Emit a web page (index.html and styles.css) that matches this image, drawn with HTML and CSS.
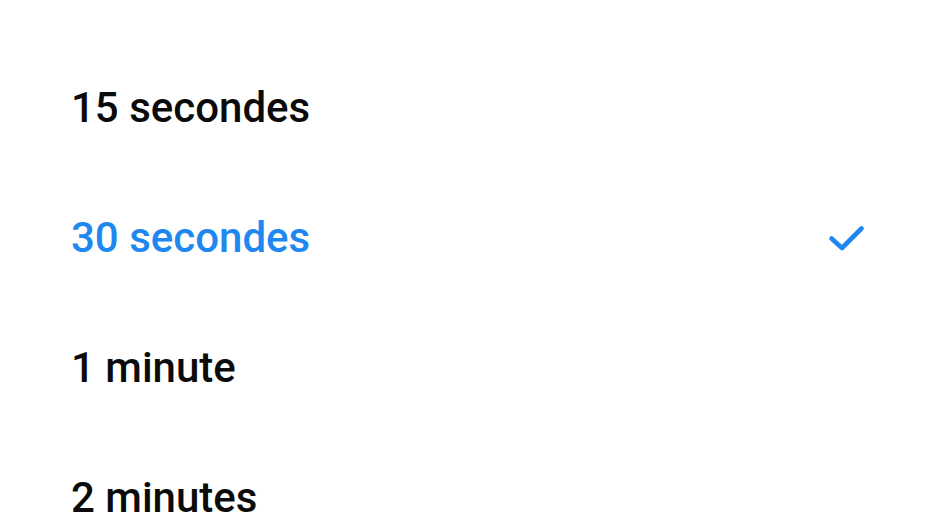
FILE: index.html
```html
<!DOCTYPE html>
<html lang="fr">
<head>
    <meta charset="UTF-8">
    <meta name="viewport" content="width=device-width, initial-scale=1.0">
    <title>Mise en veille</title>
    <link rel="stylesheet" href="styles.css">
</head>
<body>
    <ul class="option-list">
        <li class="option">
            <span class="option-label">15 secondes</span>
        </li>
        <li class="option selected">
            <span class="option-label">30 secondes</span>
            <svg class="check" width="40" height="34" viewBox="0 0 40 34">
                <polyline points="5.5,17.5 16,27 35.5,7.5" />
            </svg>
        </li>
        <li class="option">
            <span class="option-label">1 minute</span>
        </li>
        <li class="option">
            <span class="option-label">2 minutes</span>
        </li>
    </ul>
</body>
</html>
```

FILE: styles.css
```css
body {
    font-family: Roboto, 'Noto Sans', sans-serif;
    color: #0b0b0b;
    margin: 0;
    padding: 0;
    background-color: #fff;
    height: 532px;
    overflow: hidden;
}
.option-list {
    list-style: none;
    margin: 0;
    padding: 43px 0 0;
}
.option {
    display: flex;
    align-items: center;
    justify-content: space-between;
    height: 130px;
    padding: 0 79px 0 71px;
}
.option-label {
    font-size: 42px;
    font-weight: 500;
    line-height: 130px;
}
.option.selected {
    color: #1f87f0;
}
.check {
    display: block;
}
.check polyline {
    fill: none;
    stroke: #1f87f0;
    stroke-width: 4.6;
    stroke-linecap: round;
    stroke-linejoin: round;
}
```
